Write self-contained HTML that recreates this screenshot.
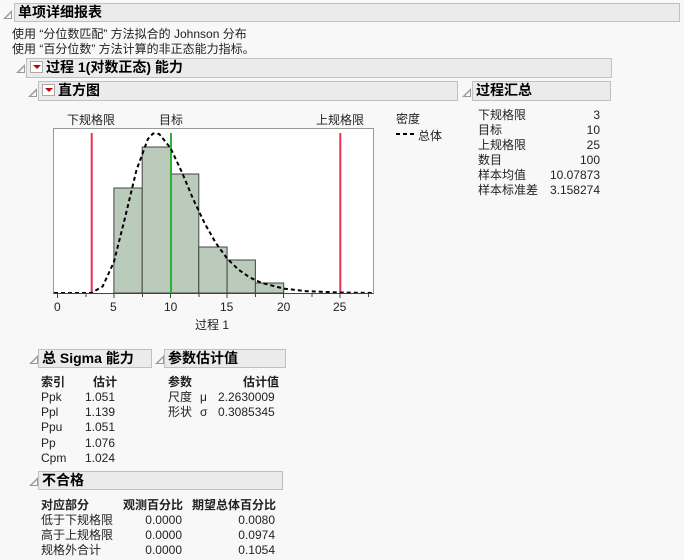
<!DOCTYPE html>
<html><head><meta charset="utf-8"><style>
body{margin:0;width:684px;height:560px;background:#f8f8f8;position:relative;overflow:hidden;font-family:"Liberation Sans","Noto Sans CJK SC",sans-serif;font-size:12px;color:#222}
.a{position:absolute;white-space:nowrap}
.bar{position:absolute;background:#ebebeb;border:1px solid #c0c0c0;box-sizing:border-box;font-weight:bold;font-size:14px;color:#000;line-height:17px;padding-left:3px}
.tri{position:absolute;width:0;height:0;border-left:9px solid transparent;border-bottom:9px solid #999}
.tri::after{content:"";position:absolute;left:-6px;top:3px;border-left:5px solid transparent;border-bottom:5px solid #f8f8f8}
.dd{display:inline-block;width:13px;height:12px;border:1px solid #aaa;background:#fff;vertical-align:-1px;margin-right:3px;position:relative;box-sizing:border-box}
.dd::after{content:"";position:absolute;left:2px;top:3px;border-left:4px solid transparent;border-right:4px solid transparent;border-top:4px solid #c00}
.b{font-weight:bold}
.r{text-align:right}
</style></head><body>
<div class="tri" style="left:3px;top:10px"></div>
<div class="bar" style="left:14px;top:3px;width:666px;height:19px">单项详细报表</div>
<div class="a" style="left:12px;top:25px">使用 “分位数匹配” 方法拟合的 Johnson 分布</div>
<div class="a" style="left:12px;top:40px">使用 “百分位数” 方法计算的非正态能力指标。</div>
<div class="tri" style="left:16px;top:64px"></div>
<div class="bar" style="left:26px;top:58px;width:586px;height:20px"><span class="dd"></span>过程 1(对数正态) 能力</div>
<div class="tri" style="left:28px;top:88px"></div>
<div class="bar" style="left:38px;top:81px;width:420px;height:20px"><span class="dd"></span>直方图</div>
<div class="tri" style="left:462px;top:88px"></div>
<div class="bar" style="left:472px;top:81px;width:139px;height:20px">过程汇总</div>

<div class="a" style="left:67px;top:111px">下规格限</div>
<div class="a" style="left:159px;top:111px">目标</div>
<div class="a" style="left:316px;top:111px">上规格限</div>

<svg class="a" style="left:0;top:0" width="684" height="560">
<rect x="53.5" y="128.5" width="320" height="165" fill="#fff" stroke="#999"/>
<g fill="#bacbbb" stroke="#444" stroke-width="1">
<rect x="113.9" y="188" width="28.3" height="105"/>
<rect x="142.2" y="147" width="28.3" height="146"/>
<rect x="170.5" y="174" width="28.3" height="119"/>
<rect x="198.8" y="247" width="28.3" height="46"/>
<rect x="227.1" y="260" width="28.3" height="33"/>
<rect x="255.4" y="283" width="28.3" height="10"/>
</g>
<line x1="91.7" y1="133" x2="91.7" y2="293" stroke="#f03050" stroke-width="2"/>
<line x1="340.3" y1="133" x2="340.3" y2="293" stroke="#f03050" stroke-width="2"/>
<line x1="171" y1="133" x2="171" y2="293" stroke="#30b030" stroke-width="2"/>
<path d="M54 293 L91.3 293 L102.6 286.5 L113.9 262 L125.2 217 L136.5 170 L147.9 139 L153 133.5 L159.2 134 L170.5 148 L181.8 172 L193.1 199 L204.5 223 L215.8 243 L227.1 258.5 L238.4 269.6 L249.7 277.4 L261.1 282.7 L283.7 288.6 L306.3 291.2 L340.3 292.5 L373 293" fill="none" stroke="#000" stroke-width="2" stroke-dasharray="4,3"/>
<line x1="53.5" y1="293.5" x2="373.5" y2="293.5" stroke="#444"/>
<g stroke="#444">
<line x1="57.5" y1="294" x2="57.5" y2="298"/><line x1="86" y1="294" x2="86" y2="297"/>
<line x1="114" y1="294" x2="114" y2="298"/><line x1="142.5" y1="294" x2="142.5" y2="297"/>
<line x1="170.5" y1="294" x2="170.5" y2="298"/><line x1="199" y1="294" x2="199" y2="297"/>
<line x1="227" y1="294" x2="227" y2="298"/><line x1="255.5" y1="294" x2="255.5" y2="297"/>
<line x1="283.5" y1="294" x2="283.5" y2="298"/><line x1="312" y1="294" x2="312" y2="297"/>
<line x1="340" y1="294" x2="340" y2="298"/><line x1="368.5" y1="294" x2="368.5" y2="297"/>
</g>
<line x1="396" y1="134" x2="416" y2="134" stroke="#000" stroke-width="2" stroke-dasharray="4,3"/>
</svg>
<div class="a" style="left:54px;top:300px">0</div>
<div class="a" style="left:110px;top:300px">5</div>
<div class="a" style="left:164px;top:300px">10</div>
<div class="a" style="left:220px;top:300px">15</div>
<div class="a" style="left:277px;top:300px">20</div>
<div class="a" style="left:333px;top:300px">25</div>
<div class="a" style="left:195px;top:316px">过程 1</div>
<div class="a" style="left:396px;top:110px">密度</div>
<div class="a" style="left:418px;top:127px">总体</div>

<div class="a" style="left:478px;top:108px;line-height:15px">下规格限<br>目标<br>上规格限<br>数目<br>样本均值<br>样本标准差</div>
<div class="a r" style="left:540px;top:108px;width:60px;line-height:15px">3<br>10<br>25<br>100<br>10.07873<br>3.158274</div>

<div class="tri" style="left:29px;top:355px"></div>
<div class="bar" style="left:38px;top:349px;width:114px;height:19px">总 Sigma 能力</div>
<div class="tri" style="left:155px;top:355px"></div>
<div class="bar" style="left:164px;top:349px;width:122px;height:19px">参数估计值</div>
<div class="a b" style="left:41px;top:373px">索引</div>
<div class="a b" style="left:93px;top:373px">估计</div>
<div class="a" style="left:41px;top:390px;line-height:15.2px">Ppk<br>Ppl<br>Ppu<br>Pp<br>Cpm</div>
<div class="a" style="left:85px;top:390px;line-height:15.2px">1.051<br>1.139<br>1.051<br>1.076<br>1.024</div>
<div class="a b" style="left:168px;top:373px">参数</div>
<div class="a b" style="left:243px;top:373px">估计值</div>
<div class="a" style="left:168px;top:390px;line-height:15.2px">尺度<br>形状</div>
<div class="a" style="left:200px;top:390px;line-height:15.2px">μ<br>σ</div>
<div class="a" style="left:218px;top:390px;line-height:15.2px">2.2630009<br>0.3085345</div>

<div class="tri" style="left:29px;top:477px"></div>
<div class="bar" style="left:38px;top:471px;width:245px;height:19px">不合格</div>
<div class="a b" style="left:41px;top:496px">对应部分</div>
<div class="a b" style="left:123px;top:496px">观测百分比</div>
<div class="a b" style="left:192px;top:496px">期望总体百分比</div>
<div class="a" style="left:41px;top:513px;line-height:15.2px">低于下规格限<br>高于上规格限<br>规格外合计</div>
<div class="a r" style="left:120px;top:513px;width:62px;line-height:15.2px">0.0000<br>0.0000<br>0.0000</div>
<div class="a r" style="left:210px;top:513px;width:65px;line-height:15.2px">0.0080<br>0.0974<br>0.1054</div>
</body></html>
